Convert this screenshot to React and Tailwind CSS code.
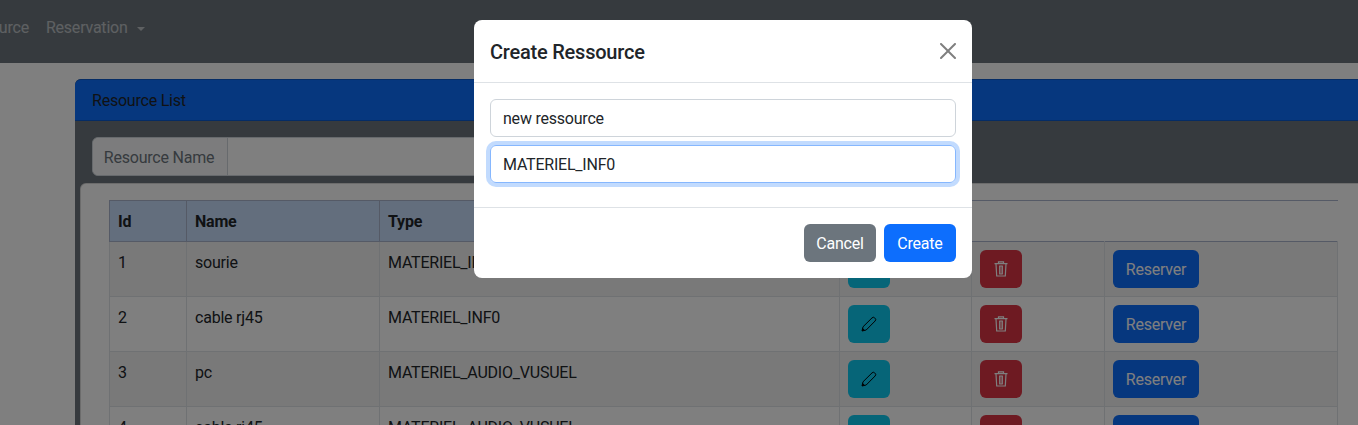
import React from 'react';

const rows = [
  { id: 1, name: 'sourie', type: 'MATERIEL_INF0' },
  { id: 2, name: 'cable rj45', type: 'MATERIEL_INF0' },
  { id: 3, name: 'pc', type: 'MATERIEL_AUDIO_VUSUEL' },
  { id: 4, name: 'cable rj45', type: 'MATERIEL_AUDIO_VUSUEL' },
];

function PencilIcon() {
  return (
    <svg viewBox="0 0 16 16" className="h-4 w-4" fill="none" stroke="currentColor" strokeWidth="1">
      <path d="M1 15l1-4.2L11 1.9a1.9 1.9 0 0 1 2.7 0l.4.4a1.9 1.9 0 0 1 0 2.7L5.2 14z" strokeLinejoin="round" />
      <path d="M1 15l.7-2.9 2.2 2.2z" fill="currentColor" stroke="none" />
    </svg>
  );
}

function TrashIcon() {
  return (
    <svg viewBox="0 0 14 16" className="h-4 w-[14px]" fill="none" stroke="currentColor" strokeWidth="1.2">
      <path d="M.5 2.6h13M4.5 2.4V.8h5v1.6M2 3l.7 12h8.6L12 3" />
      <path d="M5.2 5h3.6M5.2 13h3.6" />
      <path d="M5.8 5v8M8.2 5v8" strokeWidth="1.4" />
    </svg>
  );
}

function Row({ row, striped }) {
  const cell = 'border-b border-l border-[#dee2e6] px-2 pb-2 pt-[9px] align-top';
  const btnCell = 'border-b border-l border-[#dee2e6] p-2 align-top';
  return (
    <tr className={striped ? 'h-[55px] bg-[#f2f2f2]' : 'h-[55px] bg-white'}>
      <td className={cell}>{row.id}</td>
      <td className={cell}>{row.name}</td>
      <td className={cell}>{row.type}</td>
      <td className={btnCell}>
        <button className="flex h-[38px] w-[42px] items-center justify-center rounded-md bg-[#0dcaf0] text-black">
          <PencilIcon />
        </button>
      </td>
      <td className={btnCell}>
        <button className="flex h-[38px] w-[42px] items-center justify-center rounded-md bg-[#dc3545] text-white">
          <TrashIcon />
        </button>
      </td>
      <td className={btnCell + ' border-r'}>
        <button className="h-[38px] w-[86px] rounded-md bg-[#0d6efd] pt-[2px] text-white">Reserver</button>
      </td>
    </tr>
  );
}

export default function App() {
  return (
    <div className="relative h-[425px] w-[1358px] overflow-hidden bg-white text-[16px] leading-6 tracking-[-0.22px] text-[#212529] [font-family:Roboto,sans-serif]">
      <nav className="flex h-[63px] items-center gap-[17px] bg-[#6c757d] pb-[8px] text-white/55">
        <span className="-ml-[36px]">Resource</span>
        <span className="flex items-center gap-[9px]">
          Reservation
          <span className="mt-[2px] h-0 w-0 border-x-[4px] border-t-[4px] border-x-transparent border-t-white/55" />
        </span>
      </nav>

      <div className="ml-[75px] mt-[16px] w-[1400px] rounded-t-md bg-[#6c757d]">
        <div className="flex h-[42px] items-center rounded-t-md border-y border-black/20 bg-[#0d6efd] px-[17px] pt-[2px]">
          Resource List
        </div>
        <div className="px-[5px] pt-[16px]">
          <div className="ml-[12px] flex h-[39px] w-[500px] rounded-md border border-[#ced4da] bg-white">
            <span className="flex w-[135px] items-center justify-center rounded-l-md border-r border-[#ced4da] bg-[#f8f9fa] pr-[2px] pt-[2px] text-[#6c757d]">
              Resource Name
            </span>
          </div>
          <div className="mt-[7px] rounded-t-md border border-black/15 bg-white pl-[28px] pt-[16px]">
            <table className="w-[1228px] table-fixed border-collapse">
              <colgroup>
                <col className="w-[77px]" />
                <col className="w-[193px]" />
                <col className="w-[460px]" />
                <col className="w-[132px]" />
                <col className="w-[133px]" />
                <col className="w-[233px]" />
              </colgroup>
              <thead>
                <tr className="h-[41px] border-y border-[#aab4cc] text-left">
                  <th className="border-l border-[#aab4cc] bg-[#c7dcfb] px-2 pt-[2px] font-bold">Id</th>
                  <th className="border-l border-[#aab4cc] bg-[#c7dcfb] px-2 pt-[2px] font-bold">Name</th>
                  <th className="border-l border-[#aab4cc] bg-[#c7dcfb] px-2 pt-[2px] font-bold">Type</th>
                  <th />
                  <th />
                  <th />
                </tr>
              </thead>
              <tbody>
                {rows.map((row, i) => (
                  <Row key={row.id} row={row} striped={i % 2 === 0} />
                ))}
              </tbody>
            </table>
          </div>
        </div>
      </div>

      {/* backdrop + modal */}
      <div className="absolute inset-0 bg-black/50">
        <div className="ml-[474px] mt-[20px] h-[258px] w-[498px] rounded-lg bg-white">
          <div className="flex h-[63px] items-center justify-between border-b border-[#dee2e6] px-4">
            <h5 className="pt-[2px] text-[20px] font-medium leading-[30px]">Create Ressource</h5>
            <svg viewBox="0 0 16 16" className="h-4 w-4 text-black/50" fill="currentColor">
              <path d="M.293.293a1 1 0 0 1 1.414 0L8 6.586 14.293.293a1 1 0 1 1 1.414 1.414L9.414 8l6.293 6.293a1 1 0 0 1-1.414 1.414L8 9.414l-6.293 6.293a1 1 0 0 1-1.414-1.414L6.586 8 .293 1.707a1 1 0 0 1 0-1.414z" />
            </svg>
          </div>
          <div className="flex h-[125px] flex-col gap-2 border-b border-[#dee2e6] p-4">
            <input
              readOnly
              value="new ressource"
              className="h-[38px] rounded-md border border-[#ced4da] px-3 text-[#212529] outline-none"
            />
            <input
              readOnly
              value="MATERIEL_INF0"
              className="h-[38px] rounded-md border border-[#86b7fe] px-3 text-[#212529] shadow-[0_0_0_4px_rgba(13,110,253,0.25)] outline-none"
            />
          </div>
          <div className="flex justify-end gap-2 p-4">
            <button className="h-[38px] w-[72px] rounded-md bg-[#6c757d] pt-[2px] text-white">Cancel</button>
            <button className="h-[38px] w-[72px] rounded-md bg-[#0d6efd] pt-[2px] text-white">Create</button>
          </div>
        </div>
      </div>
    </div>
  );
}
